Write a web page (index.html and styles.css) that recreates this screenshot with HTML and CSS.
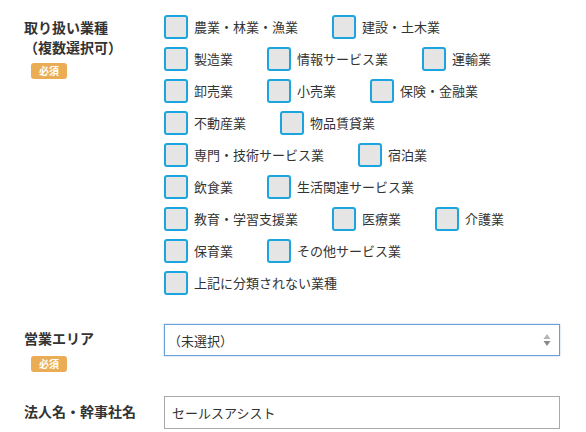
FILE: index.html
```html
<!DOCTYPE html>
<html lang="ja">
<head>
<meta charset="utf-8">
<link rel="stylesheet" href="styles.css">
</head>
<body>
<form class="form">
  <div class="row row-industry">
    <div class="label">
      <div class="label-text">取り扱い業種<br>（複数選択可）</div>
      <span class="badge">必須</span>
    </div>
    <div class="checks">
      <div class="line">
        <label class="check"><span class="box"></span>農業・林業・漁業</label>
        <label class="check"><span class="box"></span>建設・土木業</label>
      </div>
      <div class="line">
        <label class="check"><span class="box"></span>製造業</label>
        <label class="check"><span class="box"></span>情報サービス業</label>
        <label class="check"><span class="box"></span>運輸業</label>
      </div>
      <div class="line">
        <label class="check"><span class="box"></span>卸売業</label>
        <label class="check"><span class="box"></span>小売業</label>
        <label class="check"><span class="box"></span>保険・金融業</label>
      </div>
      <div class="line">
        <label class="check"><span class="box"></span>不動産業</label>
        <label class="check"><span class="box"></span>物品賃貸業</label>
      </div>
      <div class="line">
        <label class="check"><span class="box"></span>専門・技術サービス業</label>
        <label class="check"><span class="box"></span>宿泊業</label>
      </div>
      <div class="line">
        <label class="check"><span class="box"></span>飲食業</label>
        <label class="check"><span class="box"></span>生活関連サービス業</label>
      </div>
      <div class="line">
        <label class="check"><span class="box"></span>教育・学習支援業</label>
        <label class="check"><span class="box"></span>医療業</label>
        <label class="check"><span class="box"></span>介護業</label>
      </div>
      <div class="line">
        <label class="check"><span class="box"></span>保育業</label>
        <label class="check"><span class="box"></span>その他サービス業</label>
      </div>
      <div class="line">
        <label class="check"><span class="box"></span>上記に分類されない業種</label>
      </div>
    </div>
  </div>

  <div class="row row-area">
    <div class="label">
      <div class="label-text">営業エリア</div>
      <span class="badge">必須</span>
    </div>
    <div class="select">
      <span class="select-text">（未選択）</span>
      <svg class="arrows" width="8" height="14" viewBox="0 0 8 14"><path d="M4 1 L7.5 6 H0.5 Z" fill="#b5b5b5"/><path d="M4 13 L7.5 8 H0.5 Z" fill="#8a8a8a"/></svg>
    </div>
  </div>

  <div class="row row-company">
    <div class="label">
      <div class="label-text">法人名・幹事社名</div>
    </div>
    <div class="input">セールスアシスト</div>
  </div>
</form>
</body>
</html>
```

FILE: styles.css
```css
html, body {
  margin: 0;
  padding: 0;
  background: #fff;
}
body {
  font-family: "Noto Sans CJK JP", "Noto Sans", sans-serif;
  color: #333;
  font-size: 13px;
}
.form {
  width: 586px;
}
.row {
  display: grid;
  grid-template-columns: 140px 396px;
  align-items: start;
  padding-left: 24px;
}
.label {
  display: flex;
  flex-direction: column;
  align-items: flex-start;
}
.label-text {
  font-size: 14px;
  font-weight: bold;
  line-height: 20px;
  color: #333;
}
.badge {
  display: inline-block;
  margin-left: 7px;
  margin-top: 6px;
  width: 36px;
  height: 16px;
  line-height: 16px;
  border-radius: 3px;
  background: #eaad56;
  color: #fff;
  font-size: 10px;
  font-weight: bold;
  text-align: center;
}
.row-industry {
  padding-top: 15px;
}
.row-industry .label {
  padding-top: 2px;
}
.checks {
  display: flex;
  flex-direction: column;
  gap: 8px;
}
.line {
  display: flex;
  height: 24px;
}
.check {
  display: flex;
  align-items: center;
  margin-right: 34px;
  line-height: 24px;
  font-size: 13px;
  color: #333;
  white-space: nowrap;
}
.box {
  box-sizing: border-box;
  width: 24px;
  height: 24px;
  border: 2px solid #1ba4de;
  border-radius: 3px;
  background: #e5e5e5;
  margin-right: 6px;
  flex: none;
}
.row-area {
  margin-top: 29px;
}
.row-area .label {
  padding-top: 4px;
}
.row-area .badge {
  margin-top: 8px;
}
.select {
  box-sizing: border-box;
  height: 32px;
  border: 1px solid #6a9fd6;
  box-shadow: 0 0 2px rgba(100, 150, 210, 0.5);
  display: flex;
  align-items: center;
  justify-content: space-between;
  padding: 0 8px 0 3px;
}
.select-text {
  font-size: 13px;
  color: #333;
}
.row-company {
  margin-top: 24px;
}
.row-company .label {
  padding-top: 5px;
}
.input {
  box-sizing: border-box;
  height: 33px;
  border: 1px solid #a9a9a9;
  display: flex;
  align-items: center;
  padding-left: 7px;
  font-size: 13px;
  color: #333;
}
```
